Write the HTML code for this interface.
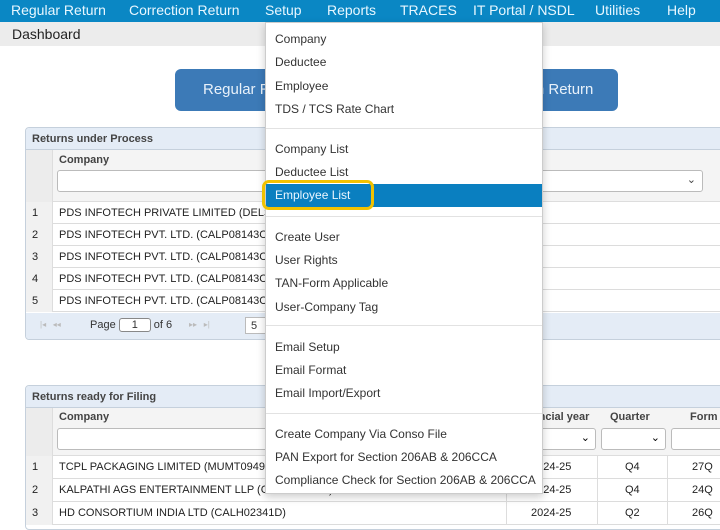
<!DOCTYPE html>
<html><head><meta charset="utf-8"><style>
*{margin:0;padding:0;box-sizing:border-box}
body{width:720px;height:526px;overflow:hidden;background:#fff;font-family:"Liberation Sans",sans-serif;position:relative}
.a{position:absolute}
.nav{left:0;top:0;width:720px;height:22px;background:#0a87c4}
.nav span{position:absolute;top:2px;color:#e8f7ff;font-size:14px}
.dash{left:0;top:22px;width:720px;height:24px;background:#ececec;font-size:14px;color:#222;padding:4px 12px}
.btn{left:175px;top:69px;width:443px;height:42px;background:#3c7ab7;border-radius:6px;color:#e8f1fa;font-size:15px}
.panel{left:25px;width:700px;border:1px solid #c5d0dc;border-radius:4px;background:#fff;overflow:hidden}
.ph{height:22px;background:#e4ecf6;border-bottom:1px solid #c5d0dc;font-size:11px;font-weight:bold;color:#444;padding:5px 6px}
.gut{position:absolute;left:0;width:27px;background:#ececec}
.row{position:absolute;left:0;width:700px;height:22px;border-bottom:1px solid #dcdcdc;font-size:11px;color:#222}
.row .n{position:absolute;left:6px;top:5px}
.row .c{position:absolute;left:33px;top:5px}
.row .g{position:absolute;left:0;top:0;width:27px;height:22px;background:#f1f1f1;border-right:1px solid #ddd}
.inp{position:absolute;height:22px;border:1px solid #bbb;border-radius:3px;background:#fff}
.menu{left:265px;top:22px;width:278px;height:472px;background:#fff;border:1px solid #ccc;box-shadow:0 3px 8px rgba(0,0,0,.2)}
.mi{position:absolute;left:9px;font-size:12px;color:#333}
.sep{position:absolute;left:0;width:276px;height:1px;background:#e2e2e2}
</style></head><body>
<div class="a nav">
<span style="left:11px">Regular Return</span><span style="left:129px">Correction Return</span><span style="left:265px">Setup</span><span style="left:327px">Reports</span><span style="left:400px">TRACES</span><span style="left:473px">IT Portal / NSDL</span><span style="left:595px">Utilities</span><span style="left:667px">Help</span>
</div>
<div class="a dash">Dashboard</div>
<div class="a btn"><span class="a" style="left:28px;top:12px">Regular Return</span><span class="a" style="left:300px;top:12px">Correction Return</span></div>

<div class="a panel" style="top:127px;height:213px">
<div class="ph">Returns under Process</div>
<div class="gut" style="top:22px;height:52px;border-right:1px solid #ddd"></div>
<div class="a" style="left:27px;top:22px;width:673px;height:52px;background:#f4f4f4;border-bottom:1px solid #ddd"></div>
<div class="a" style="left:33px;top:26px;font-size:11px;font-weight:bold;color:#444">Company</div>
<div class="inp" style="left:31px;top:42px;width:646px"><span class="a" style="right:6px;top:2px;font-size:11px;color:#444">&#8964;</span></div>
<div class="row" style="top:74px"><div class="g"></div><span class="n">1</span><span class="c">PDS INFOTECH PRIVATE LIMITED (DELS</span></div>
<div class="row" style="top:96px"><div class="g"></div><span class="n">2</span><span class="c">PDS INFOTECH PVT. LTD. (CALP08143C)</span></div>
<div class="row" style="top:118px"><div class="g"></div><span class="n">3</span><span class="c">PDS INFOTECH PVT. LTD. (CALP08143C)</span></div>
<div class="row" style="top:140px"><div class="g"></div><span class="n">4</span><span class="c">PDS INFOTECH PVT. LTD. (CALP08143C)</span></div>
<div class="row" style="top:162px"><div class="g"></div><span class="n">5</span><span class="c">PDS INFOTECH PVT. LTD. (CALP08143C)</span></div>
<div class="a" style="left:0;top:185px;width:700px;height:28px;background:#e4ecf6;font-size:11px;color:#333">
<span class="a" style="left:14px;top:7px;color:#bbb;font-size:8px">|◂ &nbsp; ◂◂</span>
<span class="a" style="left:64px;top:5px">Page <span style="display:inline-block;width:32px;height:14px;border:1px solid #888;border-radius:3px;background:#fff;text-align:center">1</span> of 6</span>
<span class="a" style="left:163px;top:7px;color:#bbb;font-size:8px">▸▸ &nbsp; ▸|</span>
<span class="a" style="left:219px;top:4px;width:30px;height:17px;background:#fff;border:1px solid #bbb;padding:2px 5px">5</span>
</div>
</div>

<div class="a panel" style="top:385px;height:145px">
<div class="ph">Returns ready for Filing</div>
<div class="gut" style="top:22px;height:48px;border-right:1px solid #ddd"></div>
<div class="a" style="left:27px;top:22px;width:673px;height:48px;background:#f4f4f4;border-bottom:1px solid #ddd"></div>
<div class="a" style="left:33px;top:25px;font-size:11px;font-weight:bold;color:#444">Company</div>
<div class="a" style="left:490px;top:25px;font-size:11px;font-weight:bold;color:#444">Financial year</div>
<div class="a" style="left:584px;top:25px;font-size:11px;font-weight:bold;color:#444">Quarter</div>
<div class="a" style="left:664px;top:25px;font-size:11px;font-weight:bold;color:#444">Form</div>
<div class="inp" style="left:31px;top:42px;width:450px"></div>
<div class="inp" style="left:490px;top:42px;width:80px"><span class="a" style="right:5px;top:2px;font-size:11px">&#8964;</span></div>
<div class="inp" style="left:575px;top:42px;width:65px"><span class="a" style="right:5px;top:2px;font-size:11px">&#8964;</span></div>
<div class="inp" style="left:645px;top:42px;width:60px"></div>
<div class="row" style="top:70px;height:23px"><div class="g" style="height:23px"></div><span class="n">1</span><span class="c">TCPL PACKAGING LIMITED (MUMT09495</span><span class="a" style="left:480px;top:0;width:1px;height:23px;background:#ddd"></span><span class="a" style="left:505px;top:5px">2024-25</span><span class="a" style="left:571px;top:0;width:1px;height:23px;background:#ddd"></span><span class="a" style="left:599px;top:5px">Q4</span><span class="a" style="left:641px;top:0;width:1px;height:23px;background:#ddd"></span><span class="a" style="left:666px;top:5px">27Q</span></div>
<div class="row" style="top:93px;height:23px"><div class="g" style="height:23px"></div><span class="n">2</span><span class="c">KALPATHI AGS ENTERTAINMENT LLP (CHEK11329D)</span><span class="a" style="left:480px;top:0;width:1px;height:23px;background:#ddd"></span><span class="a" style="left:505px;top:5px">2024-25</span><span class="a" style="left:571px;top:0;width:1px;height:23px;background:#ddd"></span><span class="a" style="left:599px;top:5px">Q4</span><span class="a" style="left:641px;top:0;width:1px;height:23px;background:#ddd"></span><span class="a" style="left:666px;top:5px">24Q</span></div>
<div class="row" style="top:116px;height:23px"><div class="g" style="height:23px"></div><span class="n">3</span><span class="c">HD CONSORTIUM INDIA LTD (CALH02341D)</span><span class="a" style="left:480px;top:0;width:1px;height:23px;background:#ddd"></span><span class="a" style="left:505px;top:5px">2024-25</span><span class="a" style="left:571px;top:0;width:1px;height:23px;background:#ddd"></span><span class="a" style="left:599px;top:5px">Q2</span><span class="a" style="left:641px;top:0;width:1px;height:23px;background:#ddd"></span><span class="a" style="left:666px;top:5px">26Q</span></div>
</div>

<div class="a menu">
<span class="mi" style="top:9px">Company</span>
<span class="mi" style="top:32px">Deductee</span>
<span class="mi" style="top:56px">Employee</span>
<span class="mi" style="top:79px">TDS / TCS Rate Chart</span>
<div class="sep" style="top:105px"></div>
<span class="mi" style="top:119px">Company List</span>
<span class="mi" style="top:142px">Deductee List</span>
<div class="a" style="left:0;top:161px;width:276px;height:23px;background:#0a7fc0"></div>
<span class="mi" style="top:165px;color:#eaf6ff">Employee List</span>
<div class="a" style="left:-4px;top:157px;width:112px;height:30px;border:3px solid #f2c200;border-radius:7px"></div>
<div class="sep" style="top:193px"></div>
<span class="mi" style="top:207px">Create User</span>
<span class="mi" style="top:230px">User Rights</span>
<span class="mi" style="top:253px">TAN-Form Applicable</span>
<span class="mi" style="top:277px">User-Company Tag</span>
<div class="sep" style="top:302px"></div>
<span class="mi" style="top:317px">Email Setup</span>
<span class="mi" style="top:340px">Email Format</span>
<span class="mi" style="top:363px">Email Import/Export</span>
<div class="sep" style="top:390px"></div>
<span class="mi" style="top:404px">Create Company Via Conso File</span>
<span class="mi" style="top:427px">PAN Export for Section 206AB &amp; 206CCA</span>
<span class="mi" style="top:450px">Compliance Check for Section 206AB &amp; 206CCA</span>
</div>
</body></html>
